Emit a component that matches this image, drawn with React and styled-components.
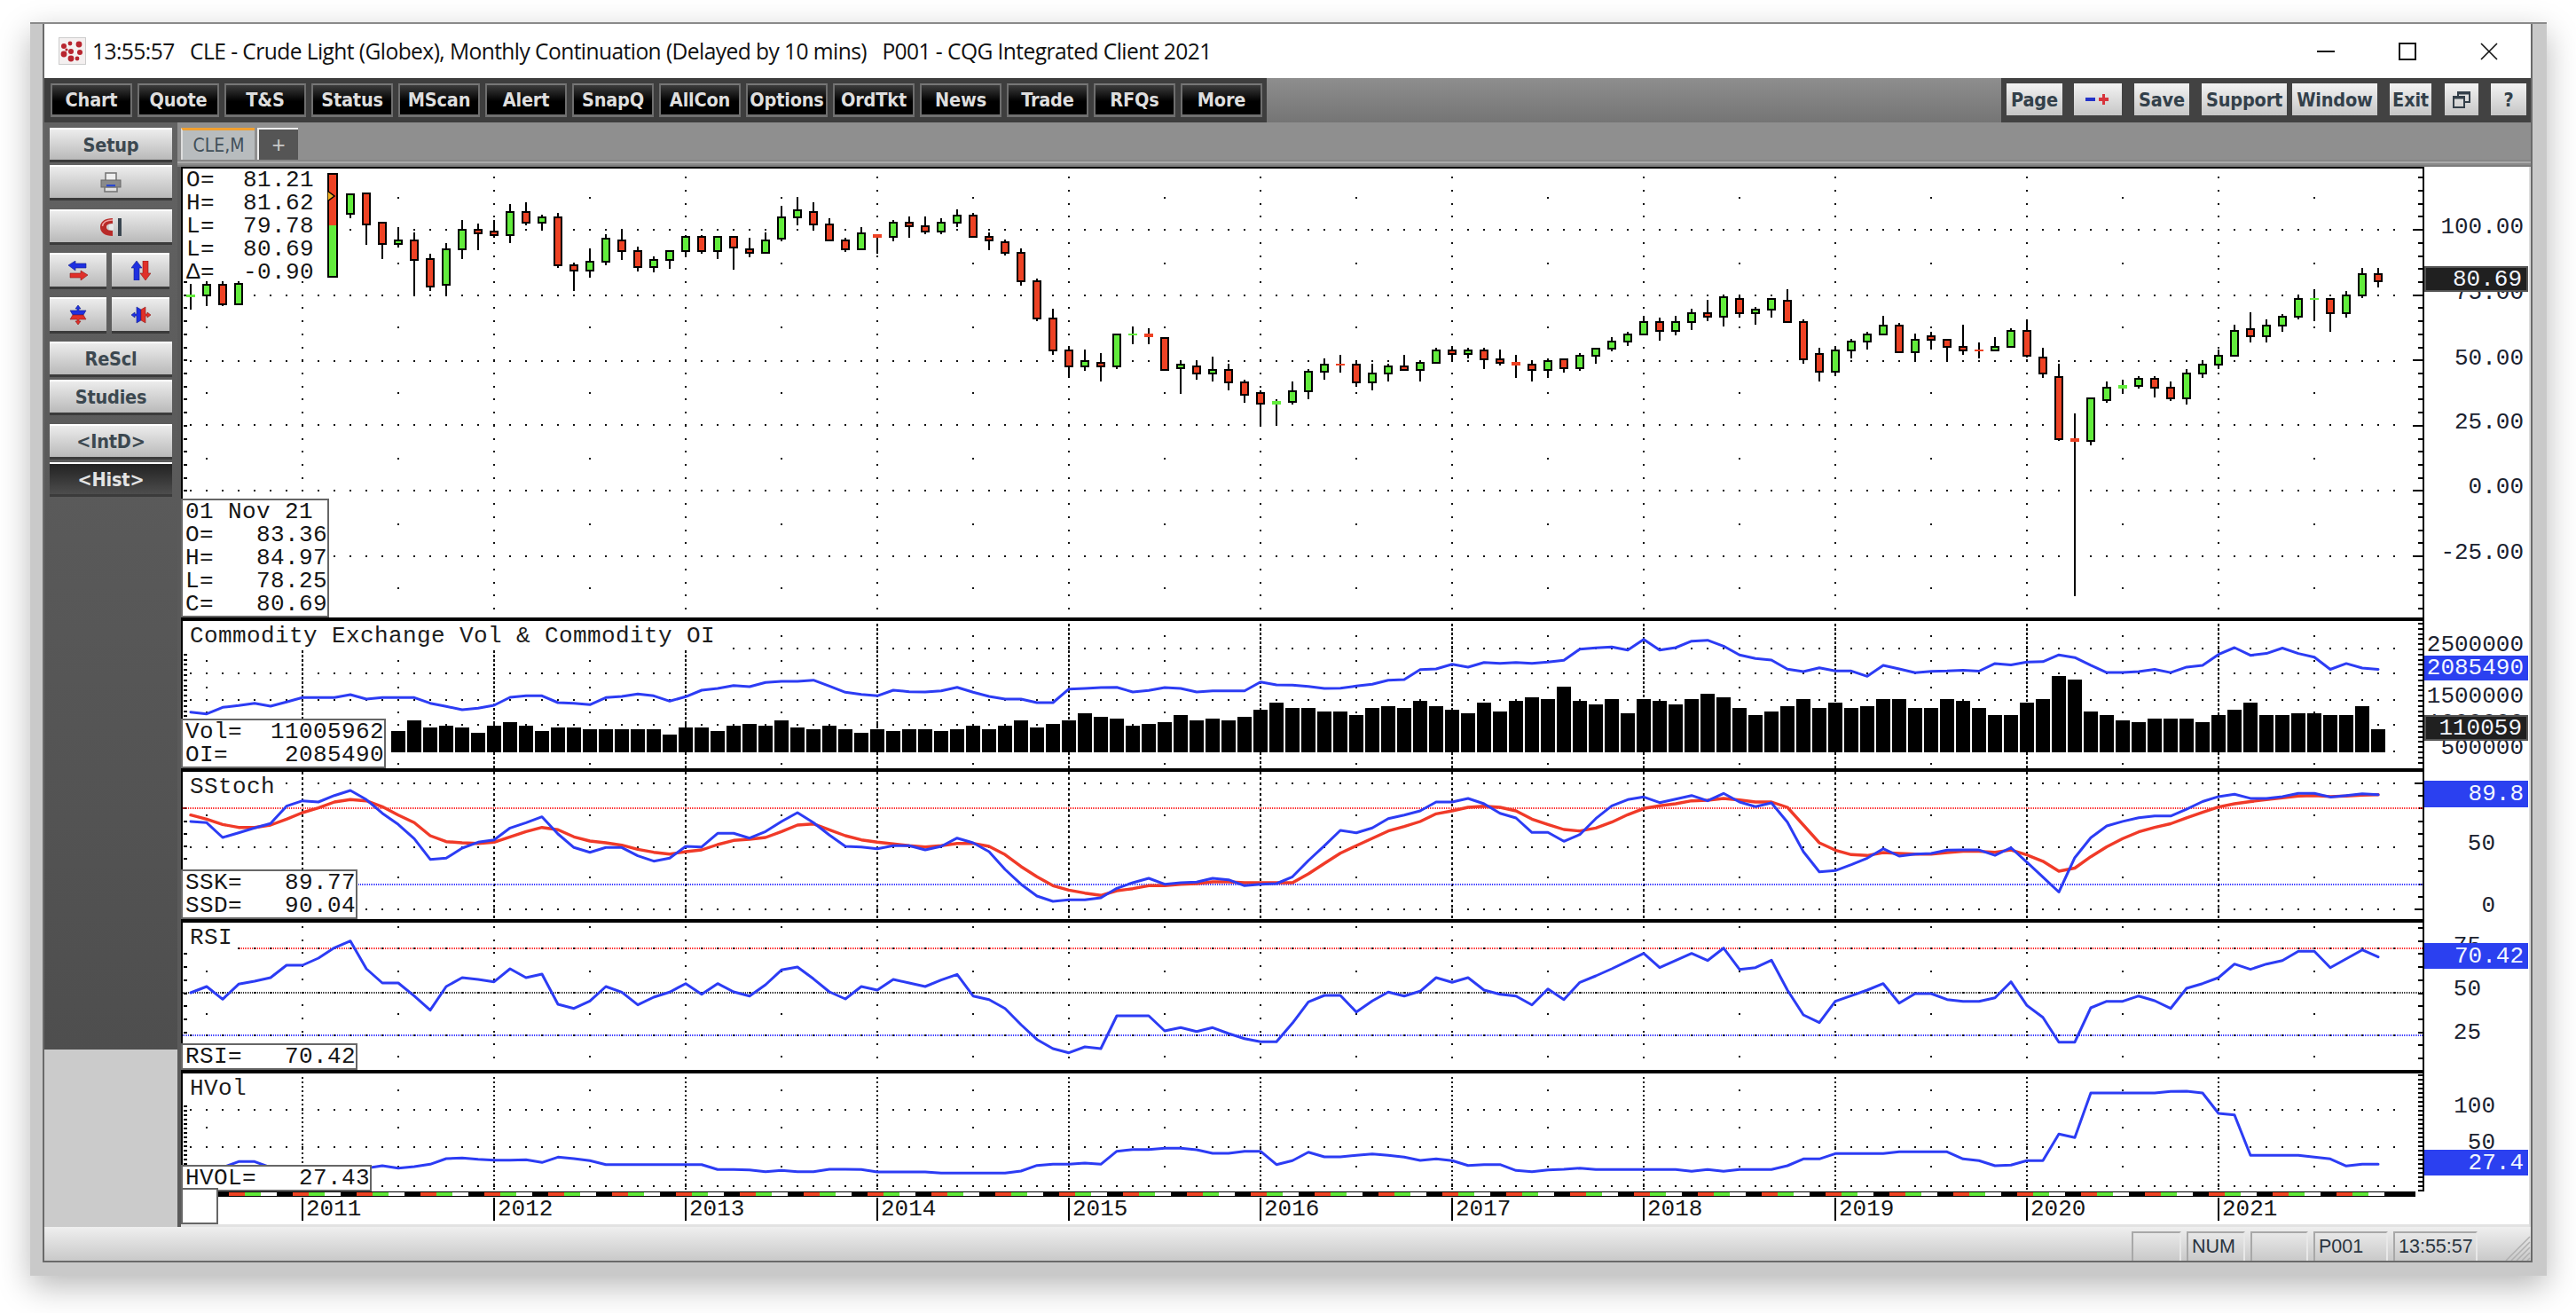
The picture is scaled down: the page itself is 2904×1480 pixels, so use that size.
import React from 'react';
import styled, { createGlobalStyle } from 'styled-components';

const MONO = '"Liberation Mono", "DejaVu Sans Mono", monospace';
const COND = '"DejaVu Sans Condensed", "DejaVu Sans", sans-serif';

const GlobalStyle = createGlobalStyle`
  html, body { margin: 0; padding: 0; background: #fff; }
  #root { width: 2904px; height: 1480px; overflow: hidden; }
`;

const Page = styled.div`
  width: 2904px; height: 1480px; padding: 25px 0 0 34px; box-sizing: border-box; background: #fff;
`;
const Frame = styled.div`
  width: 2837px; height: 1413px; box-sizing: border-box; background: #c9c9c9;
  padding: 0 16px 15px 14px; box-shadow: 0 12px 34px rgba(0,0,0,.28); border-top: 2px solid #8a8a8a;
`;
const Inner = styled.div`
  height: 100%; box-sizing: border-box; border: 2px solid #6a6a6a; border-top: 0;
  display: flex; flex-direction: column; position: relative;
`;
const TitleBar = styled.div`
  height: 61px; flex: none; background: #fff; display: flex; align-items: center; padding-left: 16px; position: relative;
`;
const TitleText = styled.div`
  margin-left: 7px; font: 400 24.6px "Open Sans", sans-serif; letter-spacing: -0.58px; color: #111; white-space: pre;
`;
const WinControls = styled.div`
  margin-left: auto; display: flex; align-items: center; gap: 72px; padding-right: 37px;
`;
const Toolbar = styled.div`
  height: 50px; flex: none; display: flex;
`;
const ToolLeft = styled.div`
  background: #3e3e3e; display: flex; gap: 6px; padding: 6px 0 0 7px; box-sizing: border-box; width: 1378px;
`;
const ToolFill = styled.div`
  flex: 1; background: linear-gradient(#8e8e8e, #757575);
`;
const ToolRight = styled.div`
  background: #424242; width: 597px; box-sizing: border-box; display: flex; padding-top: 6px;
`;
const DarkBtn = styled.div`
  width: 92px; height: 38px; box-sizing: border-box; background: linear-gradient(#3c3c3c, #000 55%);
  border: 2px solid #6e6e6e; border-top-color: #777; border-bottom: 3px solid #707070;
  color: #dedede; font: 700 21.5px ${COND}; font-stretch: condensed; display: flex; align-items: center; justify-content: center; letter-spacing: -.2px;
`;
const LightBtn = styled.div`
  width: ${p => p.$w}px; margin-left: ${p => p.$ml}px; height: 36px; box-sizing: border-box;
  background: linear-gradient(#f3f3f3, #c6c6c6); display: flex; align-items: center; justify-content: center;
  color: #33404a; font: 700 21.5px ${COND}; font-stretch: condensed; letter-spacing: -.2px;
`;
const Body = styled.div`
  flex: 1; display: flex; min-height: 0;
`;
const Sidebar = styled.div`
  width: 150px; flex: none; display: flex; flex-direction: column; background: #cbcbcb;
`;
const SideDark = styled.div`
  height: 1045px; box-sizing: border-box; padding: 6px 0 0 6px; background: linear-gradient(#626262, #4e4e4e);
  display: flex; flex-direction: column;
`;
const SideBtn = styled.div`
  width: ${p => p.$w || 138}px; height: ${p => p.$h || 36}px; margin-top: ${p => p.$mt || 0}px; box-sizing: border-box;
  background: ${p => p.$dark ? 'linear-gradient(#222, #4d4d4d)' : 'linear-gradient(#ececec, #b9b9b9)'};
  border-top: 2px solid #fff; box-shadow: 0 3px 0 #3b3b3b;
  color: ${p => p.$dark ? '#e4e4e4' : '#3c4850'}; font: 700 21.5px ${COND}; font-stretch: condensed; letter-spacing: -.2px;
  display: flex; align-items: center; justify-content: center;
`;
const SideRow = styled.div`
  display: flex; gap: 6px; margin-top: ${p => p.$mt}px;
`;
const Workspace = styled.div`
  flex: 1; display: flex; flex-direction: column; min-width: 0; background: #fff;
`;
const TabStrip = styled.div`
  height: 42px; flex: none; background: #8f8f8f; display: flex; gap: 3px; padding: 6px 0 0 4px; box-sizing: border-box;
`;
const Tab = styled.div`
  width: 83px; height: 36px; box-sizing: border-box; background: #b8bcbe; border-top: 3px solid #f0a030; border-left: 2px solid #ddd;
  color: #42505a; font: 400 21px ${COND}; font-stretch: condensed; display: flex; align-items: center; justify-content: center;
`;
const AddTab = styled.div`
  width: 46px; height: 36px; box-sizing: border-box; background: #555; border-top: 2px solid #eee; border-left: 2px solid #eee;
  color: #c8c8c8; font: 400 26px "Liberation Sans", sans-serif; display: flex; align-items: center; justify-content: center;
`;
const Stripes = styled.div`
  height: 8px; flex: none; background: linear-gradient(#868686 0 2px, #aaa 2px 4px, #8a8a8a 4px 6px, #7c7c7c 6px 8px);
`;
const Charts = styled.div`
  flex: 1; display: flex; flex-direction: column; border-left: 4px solid #5a5a5a; border-right: 2px solid #ddd; position: relative; min-height: 0;
`;
const Pane = styled.div`
  height: ${p => p.$h}px; flex: none; display: flex;
`;
const Plot = styled.div`
  width: 2529px; flex: none; box-sizing: border-box; position: relative; border-left: 2px solid #000; border-right: 2px solid #000;
  border-top: ${p => p.$t}px solid #000;
  svg { display: block; width: 100%; height: 100%; }
`;
const Axis = styled.div`
  flex: 1; position: relative; overflow: visible;
`;
const AxisLabel = styled.div`
  position: absolute; transform: translateY(-50%); font: 400 26px/26px ${MONO}; color: #1b2230; white-space: pre;
`;
const AxisBox = styled.div`
  position: absolute; left: 0; width: 117px; height: ${p => p.$h}px; box-sizing: border-box; padding-right: 5px;
  display: flex; align-items: center; justify-content: flex-end; font: 400 26px ${MONO}; color: #f2f6ff; white-space: pre;
  background: ${p => p.$dark ? '#202020' : '#2b40f0'}; border: ${p => p.$dark ? '2px solid #555' : '0'};
`;
const Legend = styled.div`
  position: absolute; left: -2px; bottom: 0; background: #fff; border: 2px solid #666; box-sizing: border-box; padding-left: 3px;
  font: 400 26px/26px ${MONO}; letter-spacing: .4px; color: #151515; white-space: pre; width: ${p => p.$w}px;
`;
const QuoteLegend = styled.div`
  position: absolute; left: 0; top: 0; width: 163px; height: 127px; background: #fff; padding-left: 4px; box-sizing: border-box;
  font: 400 26px/26px ${MONO}; letter-spacing: .4px; color: #151515; white-space: pre;
`;
const PaneTitle = styled.div`
  position: absolute; left: 0; top: 0; padding: 4px 5px 3px 8px; background: #fff;
  font: 400 26px/26px ${MONO}; letter-spacing: .4px; color: #1c1c1c; white-space: pre;
`;
const TimeRow = styled.div`
  height: 6px; flex: none; position: relative; padding-left: 42px;
`;
const TimeBar = styled.div`
  width: 2477px; height: 6px; background: #000; padding-top: 1px; box-sizing: border-box;
`;
const TimeMarks = styled.div`
  width: 2442px; height: 4px;
  background: repeating-linear-gradient(90deg, #000 0 12px, #ee4422 12px 30px, #5fe838 30px 48px, #fff 48px 66px, #000 66px 72px);
`;
const Corner = styled.div`
  position: absolute; left: 0; top: -4px; width: 42px; height: 41px; background: #fff; border: 2px solid #666; box-sizing: border-box; z-index: 2;
`;
const YearRow = styled.div`
  height: 31px; flex: none; position: relative;
`;
const Year = styled.div`
  position: absolute; top: 1px; height: 26px; border-left: 2px solid #000; padding-left: 3px;
  font: 400 26px/26px ${MONO}; color: #151515;
`;
const BottomLine = styled.div`
  height: 3px; flex: none; background: #e2e2e2;
`;
const StatusBar = styled.div`
  height: 38px; flex: none; background: linear-gradient(#efefef, #c9c9c9); display: flex; justify-content: flex-end; gap: 6px;
  padding: 5px 60px 0 0; box-sizing: border-box; position: relative;
`;
const StatusCell = styled.div`
  width: ${p => p.$w}px; height: 33px; box-sizing: border-box; border-top: 2px solid #a8a8a8; border-left: 2px solid #a8a8a8;
  border-right: 2px solid #e8e8e8; padding-left: 4px; font: 400 21.5px/30px "Liberation Sans", sans-serif; color: #2a3440;
`;
const Grip = styled.svg`
  position: absolute; right: 0; bottom: 0; width: 30px; height: 29px;
`;

/* ------- data: the numbers are pixel readings of the price chart ------- */
const X = i => 341 + 18 * i;
const G = 'g', R = 'r';
const first = [[320,332,335,349,G,1],[300,321,333,345,G],[300,321,343,345,R],[300,320,343,343,G]];
const candles = [
[219,219,241,246,G],[217,218,253,276,R],[251,251,275,292,R],[256,271,275,279,G],[262,271,293,333,R],[286,292,323,328,R],[274,281,321,333,G],[248,259,281,292,G],[252,259,263,282,R],[248,261,265,268,R],
[230,239,265,274,G],[228,239,251,254,R],[242,245,251,260,G],[240,245,299,302,R],[296,299,305,328,R],[280,295,305,313,G],[264,269,295,299,G],[258,271,283,293,R],[278,283,301,306,R],[289,293,301,307,G],
[283,283,293,303,G],[265,267,283,289,G],[265,267,283,286,R],[267,267,283,292,G],[267,267,279,304,R],[268,281,285,290,R],[262,271,285,285,G],[232,245,269,272,G],[222,237,245,254,G],[228,239,253,260,R],
[246,253,271,271,R],[268,271,281,284,R],[256,263,281,281,G],[264,264,268,286,R,1],[248,251,267,272,G],[244,251,255,268,R],[244,255,261,264,R],[246,251,261,264,G],[236,243,251,256,G],[240,243,267,267,R],
[262,267,271,282,R],[270,273,285,288,R],[280,285,317,322,R],[314,317,359,362,R],[348,359,395,400,R],[390,395,413,426,R],[394,407,413,418,G],[398,409,413,430,R],[377,377,413,416,G],[368,376,378,388,G,1],
[370,376,380,388,R,1],[381,381,417,417,R],[407,411,415,444,G],[407,413,421,428,R],[402,417,421,430,G],[410,417,431,440,R],[428,431,445,454,R],[440,443,455,480,R],[450,452,456,480,G,1],[430,441,453,456,G],
[416,419,441,450,G],[404,411,419,428,G],[400,410,412,420,R,1],[406,411,431,436,R],[410,421,431,440,G],[410,413,421,430,G],[400,413,417,417,R],[407,409,417,430,G],[392,395,409,409,G],[390,395,399,408,R],
[392,395,399,404,G],[392,395,405,416,R],[394,405,409,412,R],[400,408,412,426,R,1],[406,411,417,430,R],[404,407,417,426,G],[405,405,415,420,R],[398,401,415,418,G],[393,393,401,410,G],[380,385,393,396,G],
[374,377,385,390,G],[356,363,377,377,G],[358,363,373,384,R],[356,363,373,378,G],[348,353,363,372,G],[338,353,357,362,R],[332,335,357,368,G],[332,337,353,358,R],[346,349,353,366,G],[337,337,349,358,G],
[326,339,363,363,R],[360,363,405,410,R],[392,399,419,430,R],[390,395,419,424,G],[382,385,395,404,G],[374,377,385,394,G],[356,367,377,377,G],[364,367,397,397,R],[376,383,397,408,G],[374,379,383,394,R],
[383,383,391,408,R],[366,391,395,400,R],[386,394,396,404,R,1],[380,391,395,395,G],[370,373,391,391,G],[360,373,401,403,R],[392,403,421,426,R],[410,425,495,497,R],[466,494,498,672,R,1],[449,449,497,502,G],
[430,437,451,454,G],[428,434,438,444,G,1],[424,427,435,438,G],[424,427,437,448,R],[430,437,449,452,R],[416,421,449,456,G],[406,411,421,426,G],[394,401,411,416,G],[366,373,401,401,G],[352,371,379,386,R],
[360,367,379,386,G],[354,357,367,374,G],[332,337,357,360,G],[326,336,338,362,G,1],[337,337,353,374,R],[328,333,353,358,G],[302,309,333,336,G],[302,309,317,324,R]
];

const z3 = (base, a) => a.map(v => base + v / 3);
const z2 = (base, a) => a.map(v => base + v / 1.96);

const volTops = [
...z3(680,[432,397,420,414,420,438,414,402,414,432,420,420,426,426,426,426,426,444,420,420,432,414,408,414,397,420,426,414,426,438,426,432,426,426,432,426,414,426,414,397,420,408]),
...z3(680,[396,372,384,390,414,408,402,378,396,390,396,384,360,336,354,354,366,366,378,354,348,354,330,348,360,372,336,366,330,318,324,282,330,342,324,372,324,330,342,324,306,318,354,378,366,348,324,354,336,354,348,324,324,354,354,324]),
...z2(680,[215,231,247,247,220,212,161,169,239,247,259,263,255,255,255,263,247,235,220,247,247,243,243,247,247,227,278]),
];
const oi = [
...z3(680,[368,374,352,346,338,348,334,319,319,319,309,324,319,319,319,338,349,360,355,345,318,313,313,336,338,343,319,315,307,313,331,316,294,288,278,282,268,264,264,260,280,301,308,313,294,299,300,296,284,301,315,324,324,336,336]),
...z3(680,[290,288,285,284,300,295,285,288,300,296,296,296,266,276,277,281,288,287,280,274,260,258,224,222,206,216,200,203,200,203,199,193,155,151,148,158,122,158,150,128,125,145,175,187,192,223,231,218,229,229,247,210,222,235,230,229]),
...z2(680,[148,150,133,136,130,129,114,120,137,153,153,151,146,153,141,137,113,98,115,111,99,111,119,146,133,143,146]),
];
const sk = [
...z3(680,[738,742,792,776,760,745,686,668,672,650,633,664,710,748,796,866,862,828,808,800,760,742,722,780,826,842,826,826,854,872,862,822,824,778,778,794,772,738,708,742,784,822,824,830,820,820,834,822,794,810,840,900,950,990,1008]),
...z3(680,[1003,1003,996,964,945,930,950,945,943,930,935,955,950,948,925,870,820,768,776,760,728,716,702,672,672,660,678,710,726,775,775,805,782,728,685,664,655,674,662,650,668,643,672,688,675,740,840,908,904,884,862,830,855,848,846,835]),
...z2(680,[545,545,557,540,572,605,638,562,518,492,482,474,470,470,455,438,427,422,431,431,427,420,420,428,425,421,423]),
];
const sd = [
...z3(680,[716,730,748,758,758,750,730,708,692,672,664,668,688,716,742,786,806,810,812,808,790,772,758,766,790,804,810,818,832,842,848,840,834,816,802,798,792,772,750,746,766,786,800,808,814,820,824,820,812,812,822,850,890,925,955]),
...z3(680,[970,980,988,972,965,955,955,950,948,942,942,945,945,945,945,915,880,845,820,795,770,755,738,712,702,690,686,690,702,730,748,765,770,760,740,715,694,685,678,668,666,660,665,672,672,690,750,810,835,850,853,843,846,848,848,843]),
...z2(680,[548,548,550,545,556,570,592,585,560,538,520,505,495,487,474,462,450,443,438,434,430,426,425,427,426,424,423]),
];
const rsi = z3(1030,[267,246,289,238,228,216,174,174,150,115,92,186,234,234,278,326,246,216,222,230,186,216,204,306,320,295,246,265,308,282,265,236,272,236,264,278,240,190,180,220,264,288,246,258,222,234,246,224,205,278,290,320,375,425,456,470,450,456,345,345,345,396,385,398,385,405,
422,433,433,370,298,276,276,332,295,265,278,262,216,232,216,258,272,278,308,254,290,232,210,186,160,134,182,158,134,158,116,188,182,157,258,342,368,296,277,258,236,302,270,270,290,296,296,284,230,310,350,434,434,318,296,296,278,294,320,252,236,216,170,188,170,158,127,127,182,152,122,146]);
const hv = z3(1030,[860,860,858,838,838,858,860,860,860,860,860,860,852,860,855,847,828,826,830,833,833,832,841,823,828,835,848,848,848,848,848,848,848,865,865,866,872,868,872,872,864,864,865,873,873,873,873,877,877,877,877,877,870,851,847,847,843,847,803,797,797,793,793,798,810,810,
803,803,848,835,806,822,822,817,812,817,823,834,829,835,851,848,848,868,872,866,864,860,865,865,865,865,865,865,871,865,871,865,865,865,852,829,829,811,811,811,811,805,805,805,805,829,835,852,850,835,835,745,757,606,606,606,606,606,601,600,606,675,680,817,817,817,817,823,829,853,847,847]);

const YEARS = Array.from({ length: 11 }, (_, k) => 341 + 216 * k);
const MID = Array.from({ length: 12 }, (_, k) => 233 + 216 * k);
const MONTHS = Array.from({ length: 139 }, (_, k) => X(k - 7));
const range = (a, b, s) => { const r = []; for (let v = a; v <= b + .01; v += s) r.push(Math.round(v)); return r; };

const dots = (pts) => pts.map(([x, y]) => `M${x - 1} ${y - 1}h2v2h-2z`).join('');
const line = (vals, start = -7) => vals.map((v, k) => `${X(k + start)},${v.toFixed(1)}`).join(' ');
const tickPath = (ys, len, majors = [], majorLen = 11) => {
  let d = '';
  ys.forEach(y => { d += `M207 ${y - 1}h4v2h-4z`; const l = majors.includes(y) ? majorLen : len; d += `M${2731 - l} ${y - 1}h${l}v2h-${l}z`; });
  return d;
};

const Gridlines = ({ rows = [], mids = [], yearDots = [], yearDash }) => (
  <g shapeRendering="crispEdges">
    <path d={dots(rows.flatMap(y => MONTHS.map(x => [x, y])))} fill="#111" />
    <path d={dots(mids.flatMap(y => MID.map(x => [x, y])))} fill="#111" />
    {yearDots.length > 0 && <path d={dots(yearDots.flatMap(y => YEARS.map(x => [x, y])))} fill="#111" />}
    {yearDash && YEARS.map(x => <line key={x} x1={x} x2={x} y1={yearDash.from} y2={yearDash.to} stroke="#111" strokeWidth="2" strokeDasharray={yearDash.dash} />)}
  </g>
);

const Level = ({ y, color, from = 206, dash = '1 1' }) => (
  <line x1={from} x2="2731" y1={y} y2={y} stroke={color} strokeWidth="2" strokeDasharray={dash} shapeRendering="crispEdges" />
);
const Trace = ({ d, color, w = 3 }) => (
  <polyline points={d} fill="none" stroke={color} strokeWidth={w} strokeLinejoin="round" strokeLinecap="round" />
);

const Candle = ({ i, c }) => {
  const [wt, bt, bb, wb, col, doji] = c;
  const x = X(i);
  const fill = col === G ? '#62ec3c' : '#ee4224';
  if (doji) return (
    <g>
      <rect x={x - 1} y={wt} width="2" height={wb - wt} fill="#000" />
      <rect x={x - 5} y={bt} width="10" height={bb - bt} fill={fill} />
    </g>
  );
  return (
    <g>
      <rect x={x - 1} y={wt} width="2" height={wb - wt} fill="#000" />
      <rect x={x - 5} y={bt - 1} width="10" height={bb - bt + 2} fill="#000" />
      <rect x={x - 3} y={bt + 1} width="6" height={Math.max(1, bb - bt - 2)} fill={fill} />
    </g>
  );
};

const priceTicks = Array.from({ length: 34 }, (_, k) => Math.round(200.2 + 14.72 * k));
const priceMajors = [259, 333, 406, 480, 553, 627];

const PLOT_LEFT = 206, PLOT_W = 2525;
const ChartSvg = ({ top, h, children }) => (
  <svg viewBox={`${PLOT_LEFT} ${top} ${PLOT_W} ${h}`} preserveAspectRatio="none">{children}</svg>
);

const Labels = ({ items, paneTop, right }) => items.map(([t, y]) => (
  <AxisLabel key={t} style={{ top: y - paneTop, right }}>{t}</AxisLabel>
));
const ValueBox = ({ t, y1, y2, paneTop, dark }) => (
  <AxisBox $dark={dark} $h={y2 - y1} style={{ top: y1 - paneTop }}>{t}</AxisBox>
);

/* ------- icons ------- */
const AppIcon = () => (
  <svg width="31" height="31" viewBox="0 0 31 31">
    <rect x=".5" y=".5" width="30" height="30" fill="#f4f0f0" stroke="#ccc" />
    {[[6,10,3],[13,7,2.4],[23,8,3.4],[6,19,3.4],[14,16,3],[24,17,3],[14,24,3.4],[21,24,2.4],[9,14,1.6]].map(([x, y, r], k) => <circle key={k} cx={x} cy={y} r={r} fill="#b8252f" />)}
  </svg>
);
const MinIcon = () => <svg width="20" height="20" viewBox="0 0 20 20"><rect x="0" y="9" width="20" height="2" fill="#111" /></svg>;
const MaxIcon = () => <svg width="20" height="20" viewBox="0 0 20 20"><rect x="1" y="1" width="18" height="18" fill="none" stroke="#111" strokeWidth="2" /></svg>;
const CloseIcon = () => <svg width="20" height="20" viewBox="0 0 20 20"><path d="M1 1L19 19M19 1L1 19" stroke="#111" strokeWidth="1.6" /></svg>;
const PlusMinus = () => (
  <svg width="28" height="14" viewBox="0 0 28 14"><rect x="0" y="5" width="11" height="4" fill="#2433c8" /><path d="M15 5h4V1h3v4h4v4h-4v4h-3V9h-4z" fill="#d8343c" /></svg>
);
const RestoreIcon = () => (
  <svg width="20" height="20" viewBox="0 0 20 20" fill="none" stroke="#34404a" strokeWidth="2"><rect x="1" y="7" width="12" height="12" /><path d="M6 7V2h13v11h-6" /><path d="M6 3.5h13M1 8.500h12" strokeWidth="2" /></svg>
);
const Printer = () => (
  <svg width="24" height="24" viewBox="0 0 24 24">
    <rect x="6" y="1" width="12" height="9" fill="#eee" stroke="#777" strokeWidth="1.6" />
    <rect x="1" y="9" width="22" height="8" fill="#8a8a8a" stroke="#666" />
    <rect x="7" y="14" width="10" height="3" fill="#2a48d0" />
    <rect x="5" y="17" width="14" height="5" fill="#e4e4e4" stroke="#777" strokeWidth="1.6" />
  </svg>
);
const Magnet = () => (
  <svg width="26" height="22" viewBox="0 0 26 22">
    <path d="M15 1C6 1 1 5 1 11s5 10 14 10v-6c-4 0-7-1-7-4s3-4 7-4z" fill="#b82a28" />
    <path d="M15 3C8 3 4 6 3.500 10" stroke="#f0a0a0" strokeWidth="1.500" fill="none" />
    <rect x="11" y="8" width="5" height="6" fill="#e8e8e8" />
    <rect x="21" y="1" width="4" height="20" fill="#3a4650" />
  </svg>
);
const BLUE = '#1f30e0', RED = '#e0302a', DKB = '#10208a', DKR = '#8a1a18';
const ArrowsH = () => (
  <svg width="22" height="22" viewBox="0 0 22 22">
    <path d="M0 5L8 0v3h12v5H8v3z" fill={BLUE} stroke={DKB} strokeWidth=".6" />
    <path d="M22 16l-8-5v3H2v5h12v3z" fill={RED} stroke={DKR} strokeWidth=".6" />
  </svg>
);
const ArrowsV = () => (
  <svg width="22" height="22" viewBox="0 0 22 22">
    <path d="M6 0L0 8h3v14h6V8h3z" fill={BLUE} stroke={DKB} strokeWidth=".6" />
    <path d="M16 22l-6-8h3V0h6v14h3z" fill={RED} stroke={DKR} strokeWidth=".6" />
  </svg>
);
const SqueezeV = () => (
  <svg width="22" height="22" viewBox="0 0 22 22">
    <path d="M11 0l3 4h-2v2h8l-3 5H5L2 6h8V4H8z" fill={BLUE} stroke={DKB} strokeWidth=".6" />
    <path d="M5 11h12l3 5h-8v2h2l-3 4-3-4h2v-2H2z" fill={RED} stroke={DKR} strokeWidth=".6" />
  </svg>
);
const SqueezeH = () => (
  <svg width="22" height="22" viewBox="0 0 22 22">
    <path d="M0 11l4-3v2h2V2l5 3v12l-5 3v-8H4v2z" fill={BLUE} stroke={DKB} strokeWidth=".6" />
    <path d="M22 11l-4-3v2h-2V2l-5 3v12l5 3v-8h2v2z" fill={RED} stroke={DKR} strokeWidth=".6" />
  </svg>
);

const LEFT_BUTTONS = ['Chart','Quote','T&S','Status','MScan','Alert','SnapQ','AllCon','Options','OrdTkt','News','Trade','RFQs','More'];

export default function App() {
  return (
    <Page>
      <GlobalStyle />
      <Frame>
        <Inner>
          <TitleBar>
            <AppIcon />
            <TitleText>13:55:57   CLE - Crude Light (Globex), Monthly Continuation (Delayed by 10 mins)   P001 - CQG Integrated Client 2021</TitleText>
            <WinControls><MinIcon /><MaxIcon /><CloseIcon /></WinControls>
          </TitleBar>
          <Toolbar>
            <ToolLeft>{LEFT_BUTTONS.map(b => <DarkBtn key={b}>{b}</DarkBtn>)}</ToolLeft>
            <ToolFill />
            <ToolRight>
              <LightBtn $w={63} $ml={6}>Page</LightBtn>
              <LightBtn $w={54} $ml={13}><PlusMinus /></LightBtn>
              <LightBtn $w={62} $ml={14}>Save</LightBtn>
              <LightBtn $w={96} $ml={14}>Support</LightBtn>
              <LightBtn $w={96} $ml={6}>Window</LightBtn>
              <LightBtn $w={47} $ml={14}>Exit</LightBtn>
              <LightBtn $w={38} $ml={15}><RestoreIcon /></LightBtn>
              <LightBtn $w={40} $ml={14}>?</LightBtn>
            </ToolRight>
          </Toolbar>
          <Body>
            <Sidebar>
              <SideDark>
                <SideBtn>Setup</SideBtn>
                <SideBtn $mt={6} $h={37}><Printer /></SideBtn>
                <SideBtn $mt={13} $h={37}><Magnet /></SideBtn>
                <SideRow $mt={12}>
                  <SideBtn $w={64} $h={38}><ArrowsH /></SideBtn>
                  <SideBtn $w={65} $h={38}><ArrowsV /></SideBtn>
                </SideRow>
                <SideRow $mt={12}>
                  <SideBtn $w={64} $h={38}><SqueezeV /></SideBtn>
                  <SideBtn $w={65} $h={38}><SqueezeH /></SideBtn>
                </SideRow>
                <SideBtn $mt={12} $h={37}>ReScl</SideBtn>
                <SideBtn $mt={6} $h={37}>Studies</SideBtn>
                <SideBtn $mt={13} $h={37}>&lt;IntD&gt;</SideBtn>
                <SideBtn $mt={6} $dark>&lt;Hist&gt;</SideBtn>
              </SideDark>
            </Sidebar>
            <Workspace>
              <TabStrip>
                <Tab>CLE,M</Tab>
                <AddTab>+</AddTab>
              </TabStrip>
              <Stripes />
              <Charts>
                {/* price */}
                <Pane $h={508}>
                  <Plot $t={2}>
                    <ChartSvg top={190} h={506}>
                      <Gridlines rows={[259, 333, 407, 479, 553, 627]} mids={[223, 297, 369, 443, 517, 591, 663]} yearDots={priceTicks} />
                      <path d={tickPath(priceTicks, 5, priceMajors)} fill="#000" shapeRendering="crispEdges" />
                      <g shapeRendering="crispEdges">
                        {first.map((c, k) => <Candle key={k} i={k - 7} c={c} />)}
                        {candles.map((c, k) => <Candle key={k} i={k + 3} c={c} />)}
                        <rect x="369" y="195" width="12" height="118" fill="#000" />
                        <rect x="371" y="197" width="8" height="57" fill="#ee4224" />
                        <rect x="371" y="254" width="8" height="57" fill="#62ec3c" />
                      </g>
                      <path d="M369 215l8 6-8 6z" fill="#f4b020" stroke="#000" strokeWidth="1.500" />
                    </ChartSvg>
                    <QuoteLegend>{'O=  81.21\nH=  81.62\nL=  79.78\nL=  80.69\nΔ=  -0.90'}</QuoteLegend>
                    <Legend $w={167}>{'01 Nov 21\nO=   83.36\nH=   84.97\nL=   78.25\nC=   80.69'}</Legend>
                  </Plot>
                  <Axis>
                    <Labels paneTop={188} right="6px" items={[['100.00',256],['75.00',330],['50.00',404],['25.00',476],['0.00',549],['-25.00',623]]} />
                    <ValueBox paneTop={188} dark t="80.69" y1={300} y2={329} />
                  </Axis>
                </Pane>
                {/* volume & open interest */}
                <Pane $h={170}>
                  <Plot $t={4}>
                    <ChartSvg top={700} h={166}>
                      <Gridlines rows={[731, 759, 789, 817, 847]} mids={[717, 745, 775, 803, 861]} yearDash={{ from: 703, to: 866, dash: '3 2' }} />
                      <path d={tickPath(range(703, 863, 5.8), 5, [731, 759, 789, 817, 847], 9)} fill="#000" shapeRendering="crispEdges" />
                      <g shapeRendering="crispEdges" fill="#000">
                        {volTops.map((t, k) => <rect key={k} x={X(k + 6) - 8} y={Math.round(t)} width="16" height={848 - Math.round(t)} />)}
                      </g>
                      <Trace d={line(oi)} color="#2c3cf4" />
                    </ChartSvg>
                    <PaneTitle>Commodity Exchange Vol &amp; Commodity OI</PaneTitle>
                    <Legend $w={231}>{'Vol=  11005962\nOI=    2085490'}</Legend>
                  </Plot>
                  <Axis>
                    <Labels paneTop={696} right="6px" items={[['2500000',727],['1500000',785],['1000000',815],['500000',843]]} />
                    <ValueBox paneTop={696} t="2085490" y1={739} y2={767} />
                    <ValueBox paneTop={696} dark t="110059" y1={806} y2={835} />
                  </Axis>
                </Pane>
                {/* slow stochastic */}
                <Pane $h={170}>
                  <Plot $t={4}>
                    <ChartSvg top={870} h={166}>
                      <Gridlines rows={[883, 955, 1025]} mids={[919, 989]} yearDash={{ from: 870, to: 1036, dash: '3 3' }} />
                      <path d={tickPath(range(883, 1030, 14.2), 5, [883, 955, 1025], 9)} fill="#000" shapeRendering="crispEdges" />
                      <Level y={911} color="#ff2a2a" />
                      <Level y={997} color="#3a3aff" />
                      <Trace d={line(sd)} color="#f03a28" w={3.4} />
                      <Trace d={line(sk)} color="#2c3cf4" />
                    </ChartSvg>
                    <PaneTitle>SStoch</PaneTitle>
                    <Legend $w={199}>{'SSK=   89.77\nSSD=   90.04'}</Legend>
                  </Plot>
                  <Axis>
                    <Labels paneTop={866} right="38px" items={[['50',951],['0',1021]]} />
                    <ValueBox paneTop={866} t="89.8" y1={880} y2={910} />
                  </Axis>
                </Pane>
                {/* RSI */}
                <Pane $h={170}>
                  <Plot $t={4}>
                    <ChartSvg top={1040} h={166}>
                      <Level y={1069} color="#ff2a2a" />
                      <Level y={1119} color="#333" />
                      <Level y={1167} color="#3a3aff" />
                      <Gridlines rows={[1069, 1119, 1167]} mids={[1045, 1095, 1143, 1191]} yearDots={range(1045, 1205, 14.7)} />
                      <path d={tickPath(range(1046, 1205, 14.7), 5, [1069, 1119, 1167], 9)} fill="#000" shapeRendering="crispEdges" />
                      <Trace d={line(rsi)} color="#2c3cf4" />
                    </ChartSvg>
                    <PaneTitle>RSI</PaneTitle>
                    <Legend $w={199}>{'RSI=   70.42'}</Legend>
                  </Plot>
                  <Axis>
                    <Labels paneTop={1036} right="54px" items={[['75',1066],['50',1115],['25',1164]]} />
                    <ValueBox paneTop={1036} t="70.42" y1={1063} y2={1092} />
                  </Axis>
                </Pane>
                {/* historic volatility */}
                <Pane $h={137}>
                  <Plot $t={4}>
                    <ChartSvg top={1210} h={133}>
                      <Gridlines rows={[1251, 1293, 1337]} mids={[1229, 1271, 1315]} yearDash={{ from: 1214, to: 1343, dash: '2 3' }} />
                      <path d={tickPath(range(1212, 1342, 5), 5, [1251, 1293], 9)} fill="#000" shapeRendering="crispEdges" />
                      <Trace d={line(hv)} color="#2c3cf4" />
                    </ChartSvg>
                    <PaneTitle>HVol</PaneTitle>
                    <Legend $w={215}>{'HVOL=   27.43'}</Legend>
                  </Plot>
                  <Axis>
                    <Labels paneTop={1206} right="38px" items={[['100',1247],['50',1288]]} />
                    <ValueBox paneTop={1206} t="27.4" y1={1296} y2={1325} />
                  </Axis>
                </Pane>
                <TimeRow>
                  <Corner />
                  <TimeBar><TimeMarks /></TimeBar>
                </TimeRow>
                <YearRow>
                  {YEARS.map((x, k) => <Year key={x} style={{ left: x - 205 }}>{2011 + k}</Year>)}
                </YearRow>
                <BottomLine />
              </Charts>
            </Workspace>
          </Body>
          <StatusBar>
            <StatusCell $w={56} />
            <StatusCell $w={66}>NUM</StatusCell>
            <StatusCell $w={65} />
            <StatusCell $w={84}>P001</StatusCell>
            <StatusCell $w={95}>13:55:57</StatusCell>
            <Grip viewBox="0 0 30 29">
              <path d="M29 2L2 29M29 8L8 29M29 14L14 29M29 20L20 29M29 26L26 29" stroke="#b0b0b0" strokeWidth="1.500" />
            </Grip>
          </StatusBar>
        </Inner>
      </Frame>
    </Page>
  );
}
